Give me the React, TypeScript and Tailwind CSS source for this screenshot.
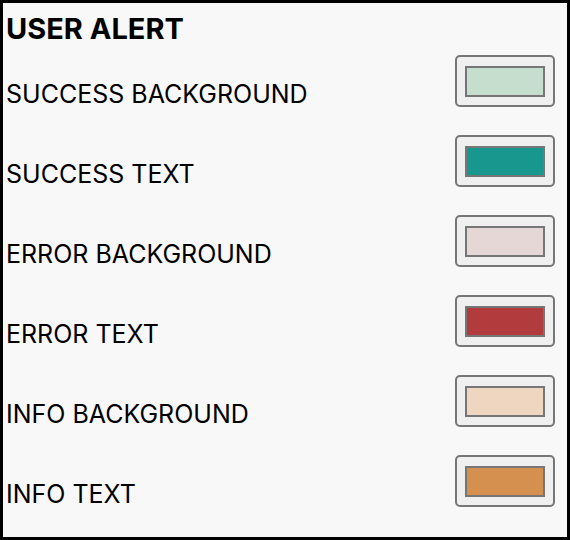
import React from "react";

interface Swatch {
  label: string;
  color: string;
}

const swatches: Swatch[] = [
  { label: "SUCCESS BACKGROUND", color: "#c6dece" },
  { label: "SUCCESS TEXT", color: "#18978f" },
  { label: "ERROR BACKGROUND", color: "#e5d7d6" },
  { label: "ERROR TEXT", color: "#b23b3e" },
  { label: "INFO BACKGROUND", color: "#efd6c0" },
  { label: "INFO TEXT", color: "#d58f4e" },
];

const ColorRow: React.FC<Swatch> = ({ label, color }) => {
  return (
    <div className="flex justify-between items-start h-[80px]">
      <div className="mt-[35px] text-[25px] leading-[28px] text-black">{label}</div>
      <div className="mt-[10px] mr-[12px] w-[100px] h-[52px] rounded-[5px] border-2 border-[#767676] bg-[#efefef] flex items-center justify-center">
        {/* swatch colour comes from data */}
        <div className="w-[80px] h-[31px] border-2 border-[#767676]" style={{ backgroundColor: color }} />
      </div>
    </div>
  );
};

export default function App() {
  return (
    <div
      className="w-[570px] h-[540px] border-[3px] border-black bg-[#f8f8f8] pl-[3px] pt-[10px] overflow-hidden"
      style={{ fontFamily: "Inter, 'Noto Sans', sans-serif" }}
    >
      <div className="text-[29px] leading-[32px] font-bold text-black">USER ALERT</div>
      <div className="flex flex-col">
        {swatches.map((s) => (
          <ColorRow key={s.label} label={s.label} color={s.color} />
        ))}
      </div>
    </div>
  );
}
